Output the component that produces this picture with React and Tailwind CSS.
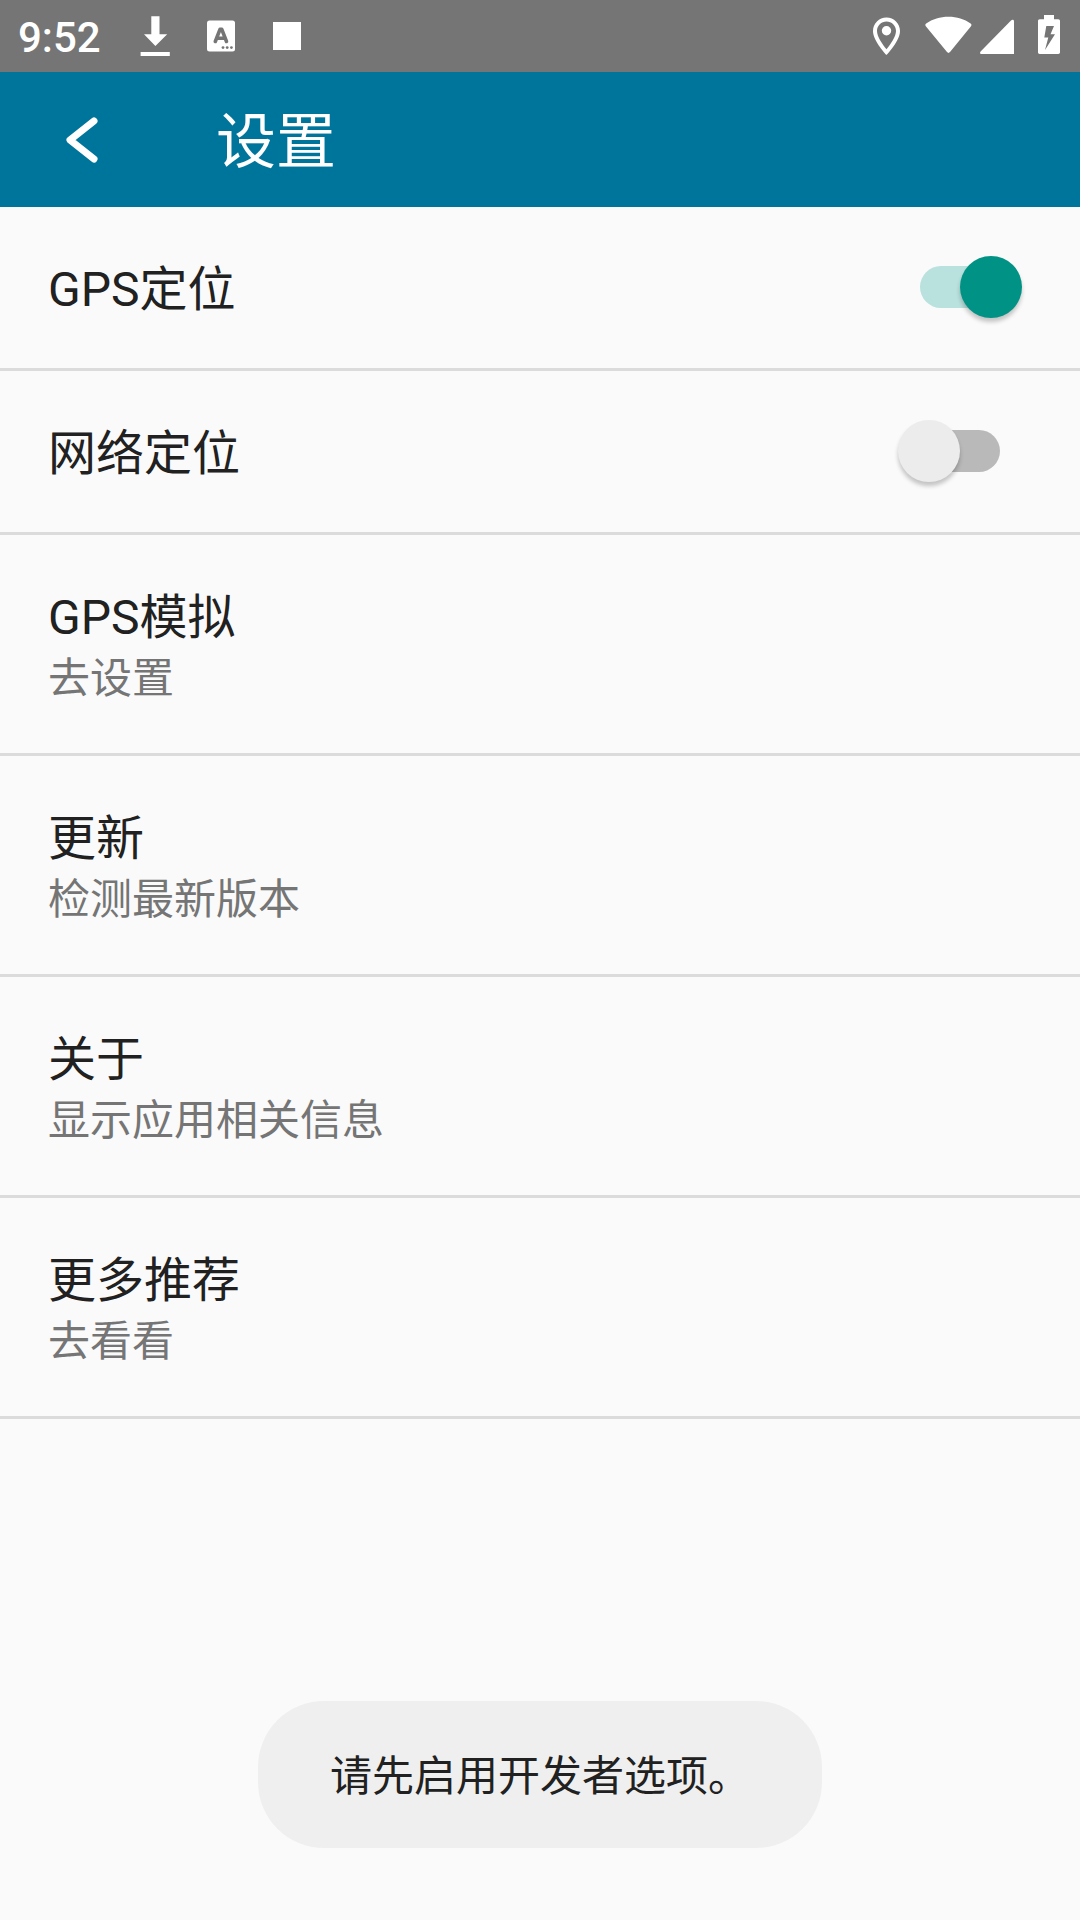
import React, { useState } from 'react';

const rows = [
  { id: 'gps', title: 'GPS定位', toggle: true },
  { id: 'network', title: '网络定位', toggle: true },
  { id: 'mock', title: 'GPS模拟', summary: '去设置' },
  { id: 'update', title: '更新', summary: '检测最新版本' },
  { id: 'about', title: '关于', summary: '显示应用相关信息' },
  { id: 'more', title: '更多推荐', summary: '去看看' },
];

function StatusBar() {
  return (
    <header className="flex h-[72px] items-center bg-[#757575] pl-[18px] pr-5 text-white">
      <span className="w-[82px] whitespace-nowrap pt-[3px] text-[42px] font-medium leading-[72px]">9:52</span>

      {/* download */}
      <svg className="ml-10 h-[72px] w-[30px]" viewBox="0 0 30 72" fill="currentColor">
        <path d="M11.3 16.3h8.2v18h7.7L15.4 46 4 34.3h7.3z" />
        <path d="M.6 52h29.2v4H.6z" />
      </svg>

      {/* keyboard */}
      <svg className="ml-[37px] h-[72px] w-7" viewBox="0 0 28 72">
        <rect x="0" y="20.5" width="28" height="31" rx="2.5" fill="#fff" />
        <path d="M8.3 41.5l4.7-12.2h1.8l4.7 12.2M9.8 38.2h8" fill="none" stroke="#757575" strokeWidth="3.6" strokeLinecap="round" strokeLinejoin="round" />
        <g fill="#757575">
          <circle cx="16" cy="47.6" r="1.4" />
          <circle cx="20.2" cy="47.6" r="1.4" />
          <circle cx="24.4" cy="47.6" r="1.4" />
        </g>
      </svg>

      <span className="mb-px ml-[38px] h-[28px] w-[28px] bg-white" />

      <div className="ml-auto flex">
        {/* location */}
        <svg className="h-[72px] w-7" viewBox="0.5 0 28 72" fill="currentColor">
          <path fillRule="evenodd" d="M14 17.5C6.5 17.5.5 23.5.5 31 .5 41 14 55 14 55s13.5-14 13.5-24c0-7.500-6-13.500-13.500-13.500zM14 21.500c5.200 0 9.500 4.200 9.500 9.500 0 5.400-5.200 13-9.500 18.200C9.700 44 4.500 36.400 4.500 31c0-5.300 4.300-9.500 9.500-9.500z" />
          <circle cx="14" cy="30.700" r="4.700" />
        </svg>

        {/* wifi */}
        <svg className="ml-6 h-[72px] w-[48px]" viewBox="0.5 0 48 72" fill="currentColor">
          <path d="M24 16.800c8.400 0 15.900 2.300 22.100 6.800 1 .7 1.100 1.700.4 2.600L25.500 52.100c-.9 1.100-2.100 1.100-3 0L1.300 26.200c-.7-.9-.6-1.900.4-2.600C8 19.100 15.600 16.800 24 16.800z" />
        </svg>

        {/* mobile signal */}
        <svg className="ml-[7px] h-[72px] w-[34px]" viewBox="0 0 34 72" fill="currentColor">
          <path d="M34 21.300V54H1.500C0 54-.4 52.500.6 51.400L31 20.600c1.300-1.300 3-.9 3 .7z" />
        </svg>

        {/* battery charging */}
        <svg className="ml-6 h-[72px] w-[22px]" viewBox="0 0 22 72" fill="currentColor">
          <path fillRule="evenodd" d="M6 15h10v4.300h4.300c1 0 1.700.7 1.700 1.700v31.300c0 1-.7 1.700-1.700 1.700H1.700C.7 54 0 53.300 0 52.300V21c0-1 .7-1.700 1.700-1.700H6zM8.300 26 6.300 37.500h4L7 50l10-15.700h-4.500L16 26z" />
        </svg>
      </div>
    </header>
  );
}

function TitleBar() {
  return (
    <div className="flex h-[135px] items-center bg-[#00759c] text-white">
      <button type="button" aria-label="返回" className="w-[216px] pl-[63px]">
        <svg className="h-[50px] w-9" viewBox="0 0 36 50" fill="none" stroke="currentColor" strokeWidth="7" strokeLinecap="round" strokeLinejoin="round">
          <path d="M31 6 7 25 31 44" />
        </svg>
      </button>
      <h1 className="pt-[7px] text-[60px] leading-none">设置</h1>
    </div>
  );
}

function Switch({ checked, onChange }) {
  return (
    <button
      type="button"
      role="switch"
      aria-checked={checked}
      onClick={() => onChange(!checked)}
      className={`relative mb-px h-[42px] w-20 rounded-full ${checked ? 'bg-[#b9e1dd]' : 'bg-[#b9b9b9]'}`}
    >
      <span
        className={`absolute -top-[10px] size-[62px] rounded-full shadow-[0_4px_4px_rgba(0,0,0,0.22)] ${
          checked ? 'left-10 bg-[#009385]' : '-left-[22px] bg-[#ececec]'
        }`}
      />
    </button>
  );
}

function SettingRow({ title, summary, children }) {
  return (
    <li className={`box-content flex items-center justify-between border-b-[3px] border-[#dbdbdb] pl-12 pr-20 ${summary ? 'h-[218px]' : 'h-[161px]'}`}>
      <div className={summary ? 'pt-2' : 'pt-[5px]'}>
        <p className="text-[48px] leading-[62px] text-[#212121]">{title}</p>
        {summary && <p className="text-[42px] leading-[60px] text-[#757575]">{summary}</p>}
      </div>
      {children}
    </li>
  );
}

export default function App() {
  const [enabled, setEnabled] = useState({ gps: true, network: false });

  return (
    <div lang="zh-CN" className="relative flex h-[1920px] w-[1080px] flex-col overflow-hidden bg-[#fafafa] font-['Roboto','Noto_Sans_CJK_SC',sans-serif]">
      <StatusBar />
      <TitleBar />
      <ul>
        {rows.map((row) => (
          <SettingRow key={row.id} title={row.title} summary={row.summary}>
            {row.toggle && (
              <Switch
                checked={enabled[row.id]}
                onChange={(value) => setEnabled((prev) => ({ ...prev, [row.id]: value }))}
              />
            )}
          </SettingRow>
        ))}
      </ul>

      {/* toast */}
      <div className="absolute bottom-[72px] left-[258px] flex h-[147px] w-[564px] items-center rounded-[66px] bg-[#efefef] pl-[72px] pt-[3px] text-[42px] text-[#212121]">
        请先启用开发者选项。
      </div>
    </div>
  );
}
